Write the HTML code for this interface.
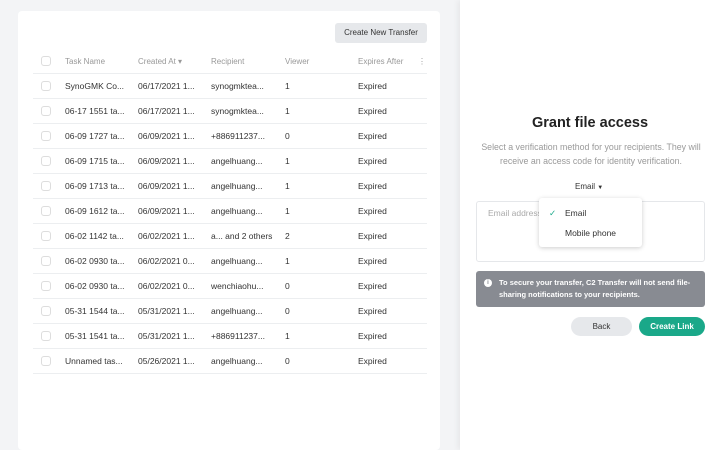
<!DOCTYPE html>
<html><head><style>
*{margin:0;padding:0;box-sizing:border-box}
body{width:720px;height:450px;overflow:hidden;background:#f3f4f6;font-family:"Liberation Sans",sans-serif;position:relative;color:#333}
.card{position:absolute;left:18px;top:11px;width:422px;height:439px;background:#fff;border-radius:4px}
.btn1{position:absolute;left:335px;top:23px;width:92px;height:20px;background:#e6e8eb;border-radius:3px;font-size:8px;line-height:20px;text-align:center;color:#333}
table{position:absolute;left:33px;top:50px;width:394px;border-collapse:collapse;font-size:8.5px}
td{height:25px;border-bottom:1px solid #eceef0;white-space:nowrap;color:#333}
tr.h td{height:23px;color:#999;font-size:8px}
.cb{width:32px;padding-left:8px}
.cb span{display:inline-block;width:10px;height:10px;border:1px solid #ddd;border-radius:3px;vertical-align:middle}
.right{position:absolute;left:460px;top:0;width:260px;height:450px;background:#fff;box-shadow:-2px 0 6px rgba(0,0,0,.06)}
</style></head><body>
<div class="card"></div>
<div class="btn1">Create New Transfer</div>
<table>
<colgroup><col style="width:32px"><col style="width:73px"><col style="width:73px"><col style="width:74px"><col style="width:73px"><col style="width:60px"><col></colgroup>
<tr class="h"><td class="cb"><span></span></td><td>Task Name</td><td>Created At ▾</td><td>Recipient</td><td>Viewer</td><td>Expires After</td><td>⋮</td></tr>
<tr><td class="cb"><span></span></td><td>SynoGMK Co...</td><td>06/17/2021 1...</td><td>synogmktea...</td><td>1</td><td>Expired</td><td></td></tr>
<tr><td class="cb"><span></span></td><td>06-17 1551 ta...</td><td>06/17/2021 1...</td><td>synogmktea...</td><td>1</td><td>Expired</td><td></td></tr>
<tr><td class="cb"><span></span></td><td>06-09 1727 ta...</td><td>06/09/2021 1...</td><td>+886911237...</td><td>0</td><td>Expired</td><td></td></tr>
<tr><td class="cb"><span></span></td><td>06-09 1715 ta...</td><td>06/09/2021 1...</td><td>angelhuang...</td><td>1</td><td>Expired</td><td></td></tr>
<tr><td class="cb"><span></span></td><td>06-09 1713 ta...</td><td>06/09/2021 1...</td><td>angelhuang...</td><td>1</td><td>Expired</td><td></td></tr>
<tr><td class="cb"><span></span></td><td>06-09 1612 ta...</td><td>06/09/2021 1...</td><td>angelhuang...</td><td>1</td><td>Expired</td><td></td></tr>
<tr><td class="cb"><span></span></td><td>06-02 1142 ta...</td><td>06/02/2021 1...</td><td>a... and 2 others</td><td>2</td><td>Expired</td><td></td></tr>
<tr><td class="cb"><span></span></td><td>06-02 0930 ta...</td><td>06/02/2021 0...</td><td>angelhuang...</td><td>1</td><td>Expired</td><td></td></tr>
<tr><td class="cb"><span></span></td><td>06-02 0930 ta...</td><td>06/02/2021 0...</td><td>wenchiaohu...</td><td>0</td><td>Expired</td><td></td></tr>
<tr><td class="cb"><span></span></td><td>05-31 1544 ta...</td><td>05/31/2021 1...</td><td>angelhuang...</td><td>0</td><td>Expired</td><td></td></tr>
<tr><td class="cb"><span></span></td><td>05-31 1541 ta...</td><td>05/31/2021 1...</td><td>+886911237...</td><td>1</td><td>Expired</td><td></td></tr>
<tr><td class="cb"><span></span></td><td>Unnamed tas...</td><td>05/26/2021 1...</td><td>angelhuang...</td><td>0</td><td>Expired</td><td></td></tr>
</table>
<div class="right">
<div style="position:absolute;top:115px;width:260px;text-align:center;font-size:14.5px;font-weight:bold;color:#222">Grant file access</div>
<div style="position:absolute;top:140px;left:14px;width:234px;text-align:center;font-size:8.8px;line-height:14px;color:#999">Select a verification method for your recipients. They will receive an access code for identity verification.</div>
<div style="position:absolute;top:182px;left:115px;font-size:8px;color:#333">Email <span style="font-size:6px">▼</span></div>
<div style="position:absolute;top:201px;left:16px;width:229px;height:61px;border:1px solid #e5e7ea;border-radius:3px;font-size:8.5px;color:#aaa;padding:6px 11px">Email address</div>
<div style="position:absolute;top:198px;left:79px;width:103px;height:49px;background:#fff;border-radius:3px;box-shadow:0 1px 5px rgba(0,0,0,.2);font-size:8.5px;color:#333">
<div style="position:absolute;top:10px;left:10px;color:#1aa889">✓</div>
<div style="position:absolute;top:10px;left:26px">Email</div>
<div style="position:absolute;top:30px;left:26px">Mobile phone</div></div>
<div style="position:absolute;top:271px;left:16px;width:229px;height:36px;background:#888b92;border-radius:3px;color:#fff;font-size:7.5px;font-weight:bold;line-height:12px;padding:6px 8px 0 23px">
<span style="position:absolute;left:8px;top:8px;width:8px;height:8px;border-radius:50%;background:#fff;color:#888b92;font-size:6px;line-height:8px;text-align:center">i</span>
To secure your transfer, C2 Transfer will not send file-sharing notifications to your recipients.</div>
<div style="position:absolute;top:317px;left:111px;width:61px;height:19px;border-radius:10px;background:#e6e8eb;font-size:8px;text-align:center;line-height:19px;color:#333">Back</div>
<div style="position:absolute;top:317px;left:179px;width:66px;height:19px;border-radius:10px;background:#1aa889;font-size:8px;font-weight:bold;text-align:center;line-height:19px;color:#fff">Create Link</div>
</div>
</body></html>
